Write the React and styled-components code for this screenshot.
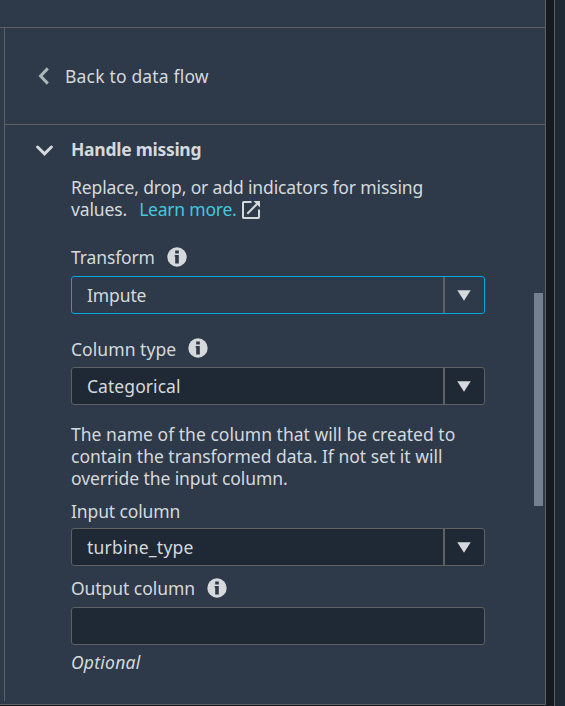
import React from "react";
import styled, { createGlobalStyle } from "styled-components";

const line = "#5f6062";
const ink = "#d5d9dc";
const surface = "#2e3949";
const well = "#1f2935";

const GlobalStyle = createGlobalStyle`
  *, *::before, *::after { box-sizing: border-box; }
  body { margin: 0; background: #16191f; overflow: hidden; }
`;

const Screen = styled.div`
  display: flex;
  width: 565px;
  height: 706px;
  background: #16191f;
  color: ${ink};
  font-family: "Noto Sans", "Open Sans", sans-serif;
  font-size: 17.5px;
  line-height: 22px;
`;

const Panel = styled.section`
  display: flex;
  flex-direction: column;
  width: 546px;
  height: 705px;
  background: ${surface};
  border-right: 1px solid ${line};
  border-bottom: 1px solid ${line};
`;

const TopStrip = styled.div`
  flex: 0 0 28px;
  border-bottom: 1px solid ${line};
`;

const Inset = styled.div`
  flex: 0 0 673px;
  margin-left: 4px;
  border-left: 1px solid ${line};
`;

const BackBar = styled.header`
  display: flex;
  align-items: center;
  height: 97px;
  padding-left: 33px;
  border-bottom: 1px solid ${line};
`;

const BackLabel = styled.span`
  margin-left: 16px;
  letter-spacing: ${(p) => p.$track}px;
  white-space: nowrap;
`;

const Body = styled.div`
  display: flex;
  justify-content: space-between;
  height: 576px;
  padding-right: 2px;
`;

const Form = styled.div`
  width: 414px;
  margin-left: 66px;
`;

const SectionTitle = styled.div`
  display: flex;
  align-items: center;
  gap: 18px;
  height: 22px;
  margin: 13px 0 16px -35px;
  font-weight: 700;

  svg {
    margin-top: 2px;
  }
`;

const Line = styled.div`
  display: flex;
  align-items: center;
  height: ${(p) => p.$h || 22}px;
  line-height: ${(p) => p.$h || 22}px;
  white-space: nowrap;
  letter-spacing: ${(p) => p.$track || 0}px;

  svg {
    margin-top: 2px;
  }
`;

const Hint = styled.div`
  margin-top: 6px;
  font-style: italic;
  letter-spacing: 0.25px;
`;

const Tracked = styled.span`
  letter-spacing: ${(p) => p.$track}px;
  white-space: nowrap;
`;

const Link = styled.a`
  margin: 0 5px 0 12px;
  color: #44c8dc;
  letter-spacing: ${(p) => p.$track}px;
`;

const Label = styled.label`
  display: flex;
  align-items: center;
  gap: 12px;
  height: 22px;
  margin-top: ${(p) => p.$top}px;

  svg {
    margin-bottom: ${(p) => p.$lift || 0}px;
  }
`;

const Field = styled.div`
  display: flex;
  height: 38px;
  margin-top: ${(p) => p.$top}px;
  border: 1px solid ${(p) => (p.$active ? "#00a8e1" : line)};
  border-radius: 3px;
  background: ${(p) => (p.$active ? surface : well)};
`;

const Value = styled.div`
  flex: 1;
  padding-left: 15px;
  line-height: 37px;
  letter-spacing: ${(p) => p.$track}px;
`;

const Caret = styled.div`
  display: flex;
  justify-content: center;
  width: 41px;
  padding: 13px 1px 0 0;
  border-left: 2px solid ${line};
`;

const Help = styled.div`
  margin-top: 18px;
`;

const ScrollThumb = styled.div`
  width: 9px;
  height: 213px;
  margin-top: 168px;
  background: #74808f;
`;

const Neighbour = styled.aside`
  width: 11px;
  height: 706px;
  margin-left: 8px;
  border-left: 1px solid ${line};
  background: ${well};
`;

const Info = () => (
  <svg width="20" height="20" viewBox="0 0 20 20">
    <circle cx="10" cy="10" r="9.7" fill={ink} />
    <path d="M8.2 3.4h3.6v3H8.2zM7.7 8h4.1v8.6H8.2V9.8h-.5z" fill={surface} />
  </svg>
);

const Select = ({ value, active, top, track }) => (
  <Field $active={active} $top={top}>
    <Value $track={track}>{value}</Value>
    <Caret>
      <svg width="14" height="11" viewBox="0 0 14 11">
        <path d="M0.3 0.3h13.4L7 10.8z" fill={ink} />
      </svg>
    </Caret>
  </Field>
);

export default function App() {
  return (
    <Screen>
      <GlobalStyle />
      <Panel>
        <TopStrip />
        <Inset>
          <BackBar>
            <svg width="11" height="18" viewBox="0 0 11 18">
              <path d="M9.8 1.4L2.6 9l7.2 7.6" fill="none" stroke="#aab7b8" strokeWidth="3" />
            </svg>
            <BackLabel $track={0.18}>Back to data flow</BackLabel>
          </BackBar>
          <Body>
            <Form>
              <SectionTitle>
                <svg width="17" height="11" viewBox="0 0 17 11">
                  <path d="M1.6 2L8.5 8.8 15.4 2" fill="none" stroke={ink} strokeWidth="3" strokeLinecap="round" />
                </svg>
                <Tracked $track={-0.27}>Handle missing</Tracked>
              </SectionTitle>
              <Line $track={-0.13}>Replace, drop, or add indicators for missing</Line>
              <Line>
                <Tracked $track={-0.12}>values.</Tracked>
                <Link $track={-0.22}>Learn more.</Link>
                <svg width="18" height="18" viewBox="0 0 18 18" fill="none" stroke={ink} strokeWidth="2">
                  <path d="M9.5 1H1.8Q1 1 1 1.8v14.4q0 .8.8.8h14.4q.8 0 .8-.8V8.5" />
                  <path d="M5.3 12.7L15.5 2.5" />
                  <path d="M11.5 0H18v6.5z" fill={ink} stroke="none" />
                </svg>
              </Line>
              <Label $top={26}><Tracked $track={-0.12}>Transform</Tracked><Info /></Label>
              <Select value="Impute" active top={8} track={-0.12} />
              <Label $top={24} $lift={2}><Tracked $track={0.06}>Column type</Tracked><Info /></Label>
              <Select value="Categorical" top={7} track={0.06} />
              <Help>
                <Line $track={0.02}>The name of the column that will be created to</Line>
                <Line $h={22} $track={0}>contain the transformed data. If not set it will</Line>
                <Line $h={22} $track={-0.08}>override the input column.</Line>
              </Help>
              <Label $top={11}><Tracked $track={-0.12}>Input column</Tracked></Label>
              <Select value="turbine_type" top={6} track={0.22} />
              <Label $top={11}><Tracked $track={-0.06}>Output column</Tracked><Info /></Label>
              <Field $top={8} />
              <Hint>Optional</Hint>
            </Form>
            <ScrollThumb />
          </Body>
        </Inset>
      </Panel>
      <Neighbour />
    </Screen>
  );
}
